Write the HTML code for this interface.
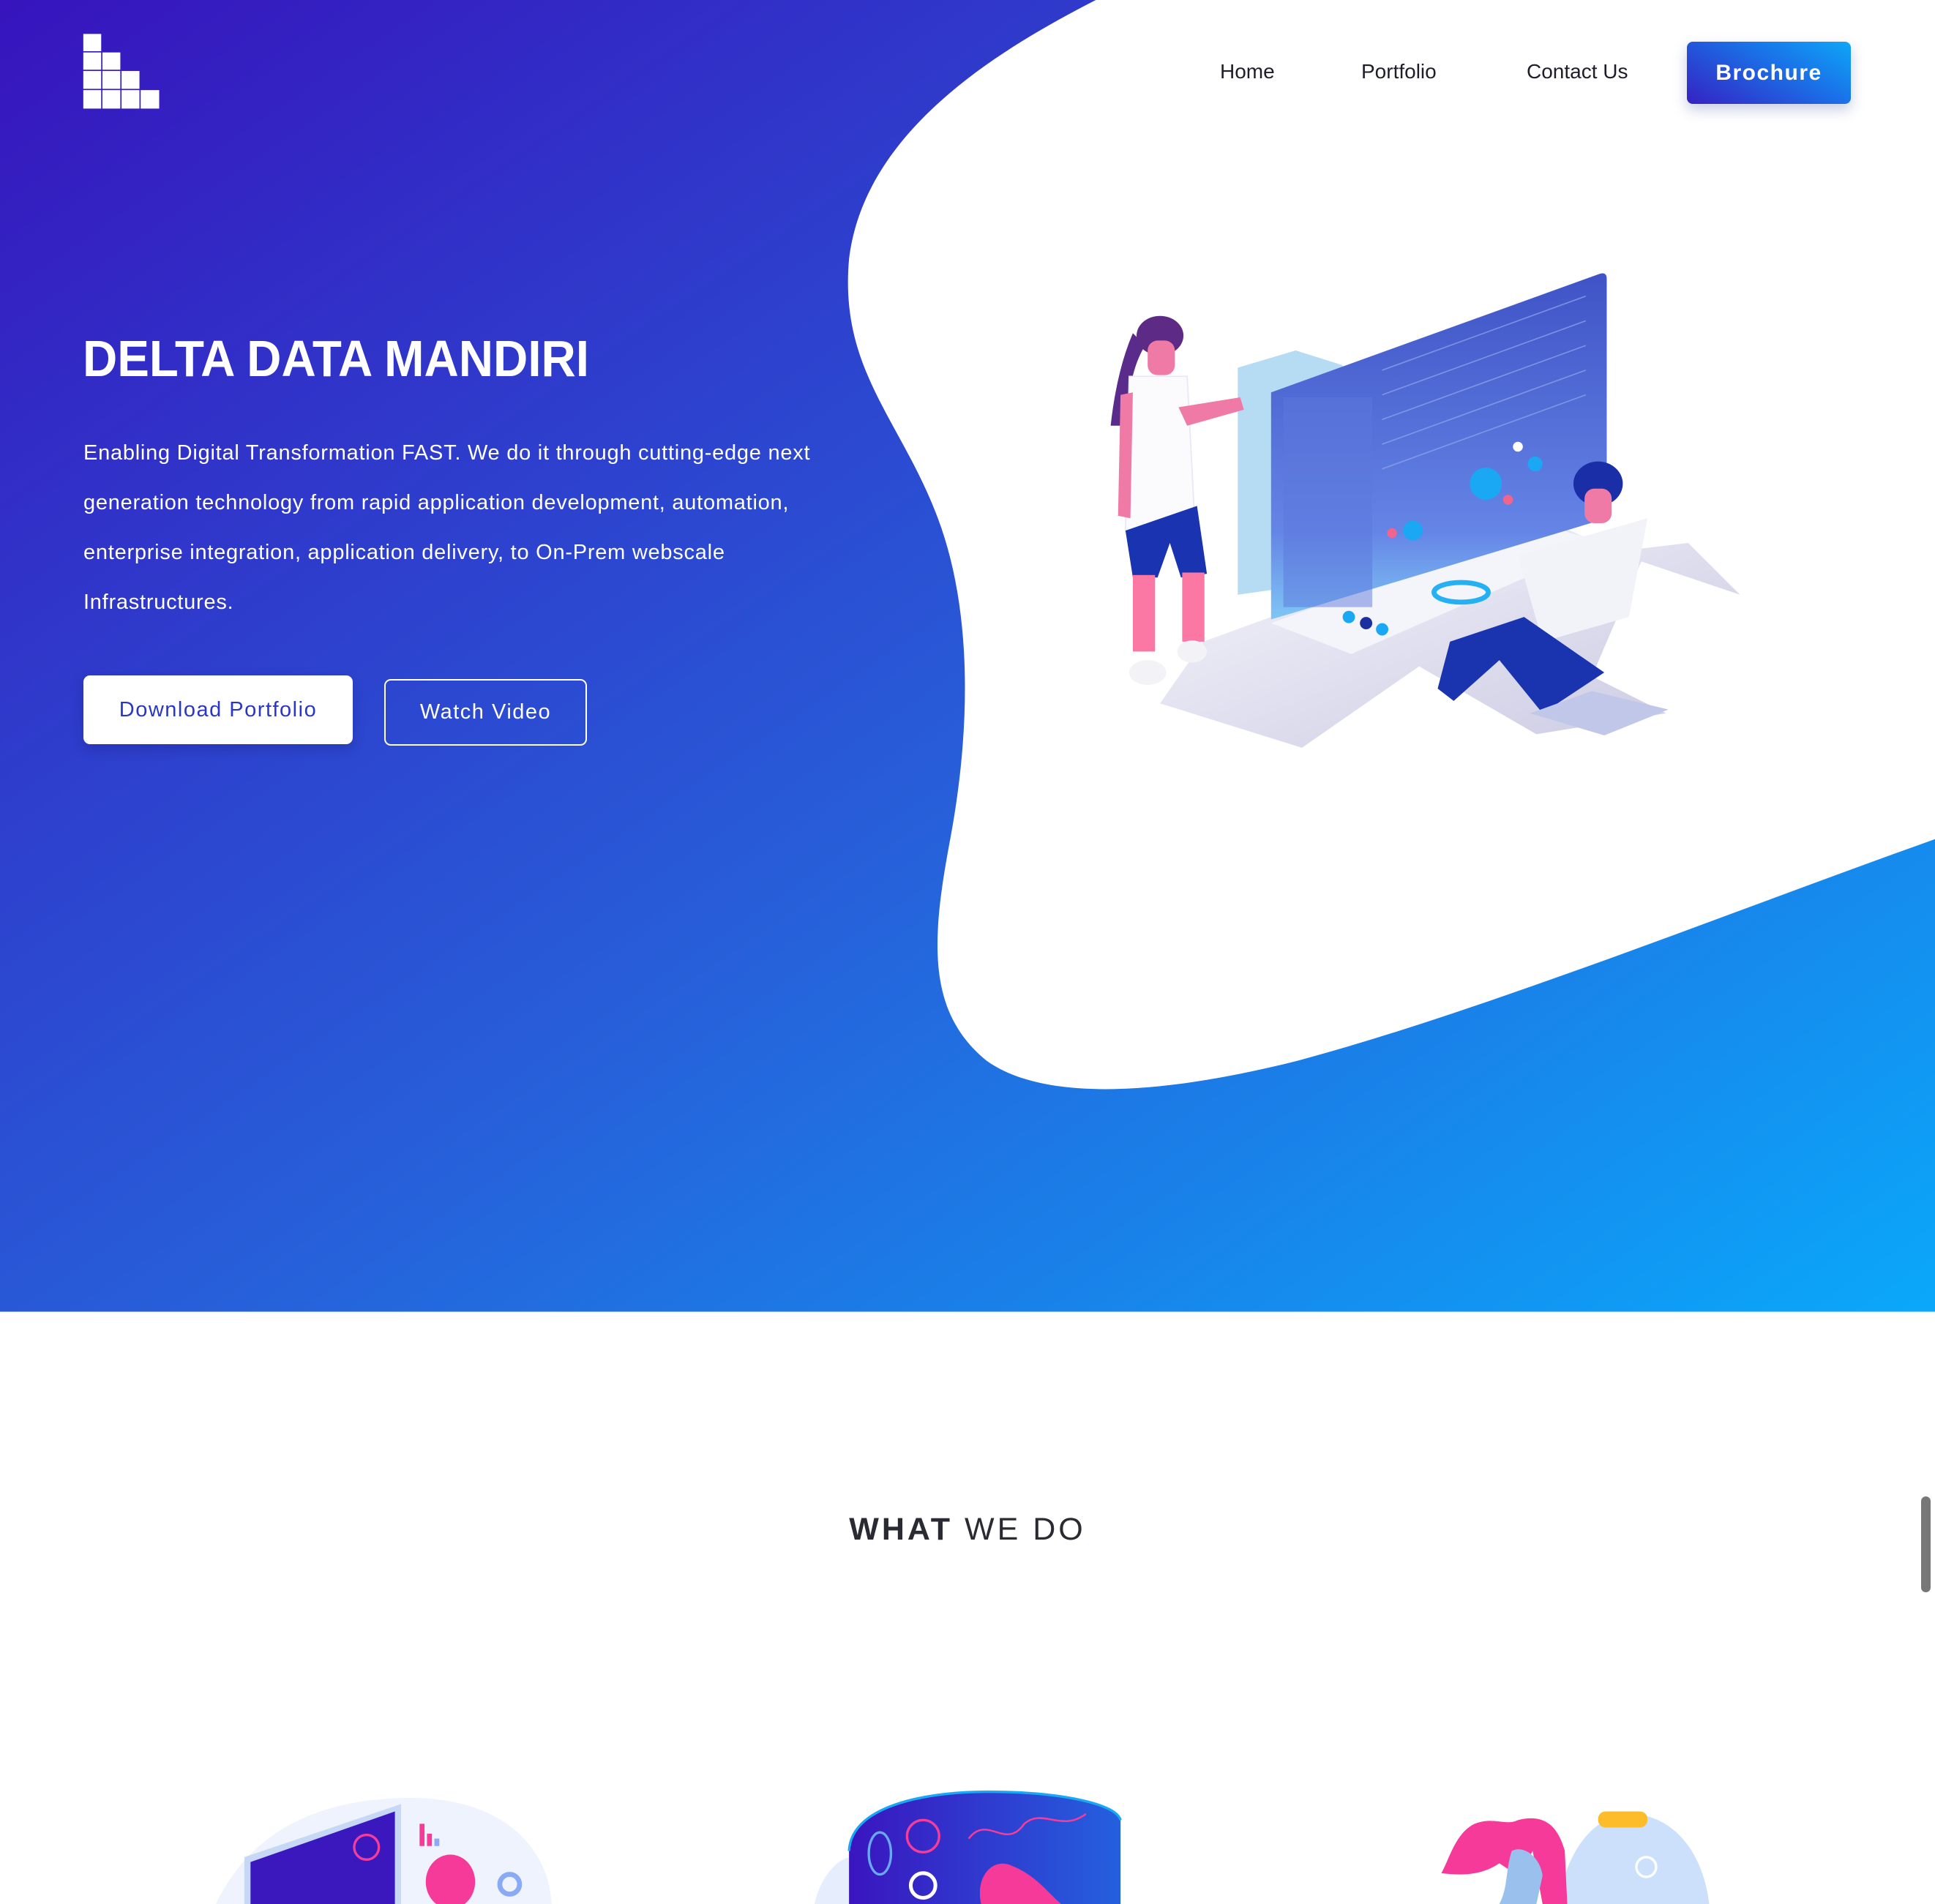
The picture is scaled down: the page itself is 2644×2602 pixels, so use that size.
<!DOCTYPE html>
<html><head><meta charset="utf-8"><style>
html,body{margin:0;padding:0;}
body{width:2644px;height:2602px;position:relative;overflow:hidden;background:#fff;font-family:"Liberation Sans",sans-serif;}
svg.bg{position:absolute;left:0;top:0;width:2644px;height:2602px;}
.abs{position:absolute;}
.nav{font-size:28px;color:#1e1e2a;top:82px;}
h1{position:absolute;left:113px;top:450px;margin:0;font-size:70px;font-weight:bold;color:#fff;transform:scaleX(0.935);transform-origin:left top;letter-spacing:0px;white-space:nowrap;}
.p{position:absolute;left:114px;top:585px;color:#fff;font-size:29px;line-height:68px;letter-spacing:0.75px;white-space:nowrap;}
.b1{left:114px;top:923px;width:368px;height:94px;background:#fff;border-radius:9px;color:#2a36c4;font-size:29px;letter-spacing:1.5px;text-align:center;line-height:94px;box-shadow:0 6px 16px rgba(20,20,90,.25);}
.b2{left:525px;top:928px;width:273px;height:87px;border:2px solid #fff;border-radius:9px;color:#fff;font-size:29px;letter-spacing:1.5px;text-align:center;line-height:87px;}
.br{left:2305px;top:57px;width:224px;height:85px;border-radius:8px;background:linear-gradient(30deg,#3522c2,#1a72e8 60%,#0ea6f7);color:#fff;font-size:30px;font-weight:bold;letter-spacing:1.5px;text-align:center;line-height:85px;box-shadow:0 8px 18px rgba(40,60,150,.25);}
.wwd{left:0;width:2644px;top:2066px;text-align:center;font-size:43px;letter-spacing:4px;color:#2a2a33;}
.sb{left:2625px;top:2045px;width:13px;height:131px;border-radius:7px;background:#777;}
</style></head><body>
<svg class="bg" viewBox="0 0 1568 1543" preserveAspectRatio="none">
<defs>
<linearGradient id="hero" x1="0" y1="0" x2="1" y2="1"><stop offset="0" stop-color="#3714bd"/><stop offset="0.55" stop-color="#275fd9"/><stop offset="1" stop-color="#0aa8fb"/></linearGradient>
<linearGradient id="scr" x1="0" y1="0" x2="0" y2="1"><stop offset="0" stop-color="#3f53c6"/><stop offset="0.75" stop-color="#6585e6"/><stop offset="1" stop-color="#7fc6f5"/></linearGradient>
<linearGradient id="desk" x1="0" y1="0" x2="1" y2="1"><stop offset="0" stop-color="#f7f7fc"/><stop offset="1" stop-color="#c9c8e2"/></linearGradient>
<linearGradient id="dome" x1="0" y1="0" x2="1" y2="0"><stop offset="0" stop-color="#3a15bf"/><stop offset="1" stop-color="#2460de"/></linearGradient>
</defs>
<rect x="0" y="0" width="1568" height="1063" fill="url(#hero)"/>
<path d="M888 0 C800 45 700 110 688 210 C680 300 730 340 760 420 C790 500 785 600 770 680 C755 760 750 820 800 860 C850 895 950 885 1050 860 C1200 820 1400 740 1568 680 L1568 0 Z" fill="#fff"/>
<g fill="#fff">
<rect x="67.5" y="27.5" width="14.5" height="14"/>
<rect x="67.5" y="42.5" width="14.5" height="14"/><rect x="83" y="42.5" width="14.5" height="14"/>
<rect x="67.5" y="57.5" width="14.5" height="14.5"/><rect x="83" y="57.5" width="14.5" height="14.5"/><rect x="98.5" y="57.5" width="14.5" height="14.5"/>
<rect x="67.5" y="73" width="14.5" height="15"/><rect x="83" y="73" width="14.5" height="15"/><rect x="98.5" y="73" width="14.5" height="15"/><rect x="114" y="73" width="15" height="15"/>
</g>
<polygon points="940,570 1055,606 1150,540 1245,595 1350,578 1290,548 1330,455 1410,482 1368,440 1310,447 1250,420 1030,500 975,520" fill="url(#desk)"/>
<polygon points="1030,505 1250,425 1300,440 1095,530" fill="#f4f5fb"/>
<polygon points="1003,298 1050,284 1088,296 1088,470 1003,482" fill="#a9d6f2" opacity="0.85"/>
<path d="M1030 318 L1296 222 Q1302 220 1302 226 L1302 420 L1030 502 Z" fill="url(#scr)"/>
<g stroke="#8fa7ec" stroke-width="1" opacity="0.7">
<line x1="1120" y1="300" x2="1285" y2="240"/><line x1="1120" y1="320" x2="1285" y2="260"/><line x1="1120" y1="340" x2="1285" y2="280"/><line x1="1120" y1="360" x2="1285" y2="300"/><line x1="1120" y1="380" x2="1285" y2="320"/>
</g>
<rect x="1040" y="322" width="72" height="170" fill="#5b78dc" opacity="0.5"/>
<circle cx="1204" cy="392" r="13" fill="#1aa8f5"/><circle cx="1145" cy="430" r="8" fill="#1aa8f5"/>
<circle cx="1230" cy="362" r="4" fill="#fff"/><circle cx="1244" cy="376" r="6" fill="#1aa8f5"/><circle cx="1222" cy="405" r="4" fill="#f0658f"/><circle cx="1128" cy="432" r="4" fill="#f0658f"/>
<ellipse cx="1184" cy="480" rx="22" ry="8" fill="none" stroke="#25b0f4" stroke-width="4"/>
<circle cx="1093" cy="500" r="5" fill="#1aa8f5"/><circle cx="1107" cy="505" r="5" fill="#1b2fa0"/><circle cx="1120" cy="510" r="5" fill="#1aa8f5"/>
<path d="M918 270 Q905 300 900 345 L912 345 Q915 300 928 280 Z" fill="#5a2b8a"/>
<ellipse cx="940" cy="272" rx="19" ry="16" fill="#5d2a85"/>
<rect x="930" y="276" width="22" height="28" rx="8" fill="#f07aa6"/>
<path d="M915 305 L962 305 L968 420 L938 432 L912 430 Z" fill="#fbfbfe" stroke="#e6e8f5" stroke-width="1"/>
<path d="M908 320 L918 318 L916 420 L906 418 Z" fill="#f07aa6"/>
<path d="M955 330 L1005 322 L1008 332 L962 345 Z" fill="#f07aa6"/>
<path d="M912 430 L970 410 L978 465 L957 468 L948 440 L938 468 L918 468 Z" fill="#1a33b0"/>
<rect x="918" y="466" width="18" height="62" fill="#fb78a5"/><rect x="958" y="464" width="18" height="56" fill="#fb78a5"/>
<ellipse cx="930" cy="545" rx="15" ry="10" fill="#f2f2f7"/><ellipse cx="966" cy="528" rx="12" ry="9" fill="#f2f2f7"/>
<ellipse cx="1295" cy="392" rx="20" ry="18" fill="#1a2ea8"/>
<rect x="1284" y="396" width="22" height="28" rx="8" fill="#f07aa6"/>
<path d="M1230 450 L1335 420 L1320 500 L1250 520 Z" fill="#f2f2f9"/>
<path d="M1175 520 L1235 500 L1300 545 L1250 578 L1215 535 L1178 568 L1165 558 Z" fill="#1a34b0"/>
<polygon points="1240,578 1300,596 1352,575 1290,560" fill="#c1c7e8"/>
<path d="M175 1543 C200 1490 250 1458 330 1457 C410 1456 445 1500 447 1543 Z" fill="#eef3fd"/>
<polygon points="198,1505 325,1462 325,1543 198,1543" fill="#c7d8f7"/>
<polygon points="203,1509 320,1468 320,1543 203,1543" fill="#3a18be"/>
<circle cx="297" cy="1497" r="10" fill="none" stroke="#f43d9a" stroke-width="2"/>
<ellipse cx="365" cy="1525" rx="20" ry="22" fill="#f53a9a"/>
<rect x="340" y="1478" width="4" height="18" fill="#f53a9a"/><rect x="346" y="1486" width="4" height="10" fill="#f53a9a"/><rect x="352" y="1490" width="4" height="6" fill="#8aaaf5"/>
<circle cx="413" cy="1527" r="8" fill="none" stroke="#8aaaf5" stroke-width="4"/>
<path d="M660 1543 C665 1520 680 1505 690 1505 L690 1543 Z" fill="#e6eefd"/>
<path d="M688 1543 L688 1500 C690 1460 760 1452 800 1452 C860 1452 905 1462 908 1475 L908 1543 Z" fill="url(#dome)"/>
<path d="M688 1500 C690 1460 760 1452 800 1452 C860 1452 905 1462 908 1475" fill="none" stroke="#1aa8f5" stroke-width="2"/>
<ellipse cx="713" cy="1502" rx="9" ry="17" fill="none" stroke="#6aa7f5" stroke-width="2"/>
<circle cx="748" cy="1488" r="13" fill="none" stroke="#f43d9a" stroke-width="2"/>
<circle cx="748" cy="1528" r="10" fill="none" stroke="#fff" stroke-width="3"/>
<path d="M795 1543 C790 1520 805 1505 820 1512 C840 1520 850 1535 860 1543 Z" fill="#f53a9a"/>
<path d="M785 1490 C800 1470 815 1500 830 1478 C845 1465 860 1485 880 1470" fill="none" stroke="#f43d9a" stroke-width="1.5"/>
<path d="M1262 1543 C1270 1500 1290 1472 1320 1470 C1355 1470 1380 1500 1385 1543 Z" fill="#cde0fb"/>
<rect x="1295" y="1468" width="40" height="13" rx="6" fill="#fdbd2a"/>
<circle cx="1334" cy="1513" r="8" fill="none" stroke="#fff" stroke-width="2"/>
<path d="M1168 1518 C1175 1505 1180 1485 1195 1478 C1210 1472 1220 1480 1230 1475 C1250 1470 1262 1478 1268 1500 L1270 1543 L1250 1543 L1242 1500 L1230 1520 L1215 1510 C1200 1520 1185 1520 1168 1518 Z" fill="#f53a9a"/>
<path d="M1225 1500 C1235 1495 1248 1505 1250 1520 L1245 1543 L1215 1543 C1222 1530 1220 1515 1225 1500 Z" fill="#9ac0ee"/>
</svg>
<div class="abs nav" style="left:1667px">Home</div>
<div class="abs nav" style="left:1860px">Portfolio</div>
<div class="abs nav" style="left:2086px">Contact Us</div>
<div class="abs br">Brochure</div>
<h1>DELTA DATA MANDIRI</h1>
<div class="p">Enabling Digital Transformation FAST. We do it through cutting-edge next<br>generation technology from rapid application development, automation,<br>enterprise integration, application delivery, to On-Prem webscale<br>Infrastructures.</div>
<div class="abs b1">Download Portfolio</div>
<div class="abs b2">Watch Video</div>
<div class="abs wwd"><b>WHAT</b> WE DO</div>
<div class="abs sb"></div>
</body></html>
